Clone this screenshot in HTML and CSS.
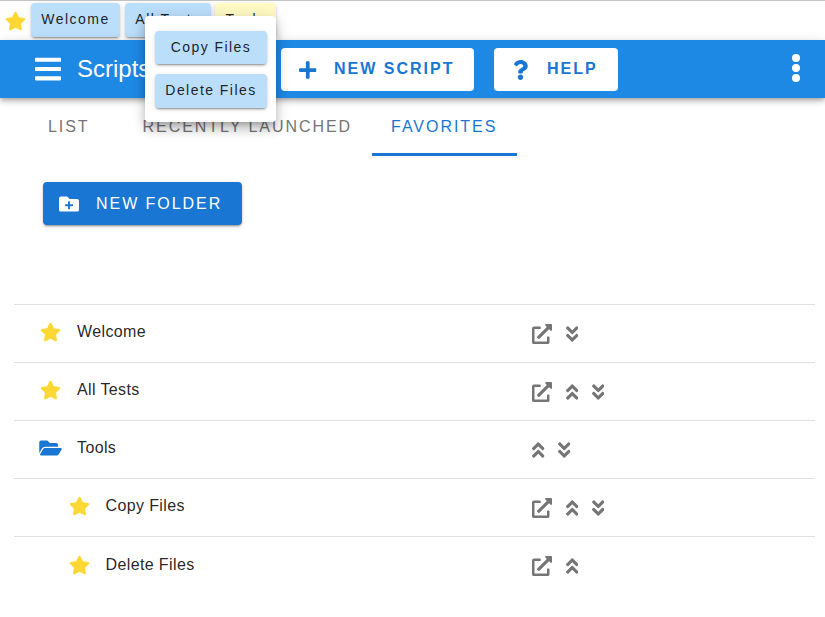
FILE: index.html
```html
<!DOCTYPE html>
<html lang="en">
<head>
<meta charset="utf-8">
<title>Scripts</title>
<link rel="stylesheet" href="styles.css">
</head>
<body>
<svg class="defs" aria-hidden="true">
  <symbol id="star" viewBox="0 0 576 512"><path d="M259.3 17.8L194 150.2 47.9 171.5c-26.2 3.8-36.7 36.1-17.7 54.6l105.7 103-25 145.5c-4.5 26.3 23.2 46 46.4 33.7L288 439.6l130.7 68.7c23.2 12.2 50.9-7.4 46.4-33.7l-25-145.5 105.7-103c19-18.5 8.5-50.8-17.7-54.6L382 150.2 316.7 17.8c-11.7-23.6-45.6-23.9-57.4 0z"/></symbol>
  <symbol id="bars" viewBox="0 0 448 512"><path d="M16 132h416c8.837 0 16-7.163 16-16V76c0-8.837-7.163-16-16-16H16C7.163 60 0 67.163 0 76v40c0 8.837 7.163 16 16 16zm0 160h416c8.837 0 16-7.163 16-16v-40c0-8.837-7.163-16-16-16H16c-8.837 0-16 7.163-16 16v40c0 8.837 7.163 16 16 16zm0 160h416c8.837 0 16-7.163 16-16v-40c0-8.837-7.163-16-16-16H16c-8.837 0-16 7.163-16 16v40c0 8.837 7.163 16 16 16z"/></symbol>
  <symbol id="plus" viewBox="0 0 448 512"><path d="M416 208H272V64c0-17.67-14.33-32-32-32h-32c-17.67 0-32 14.33-32 32v144H32c-17.67 0-32 14.33-32 32v32c0 17.67 14.33 32 32 32h144v144c0 17.67 14.33 32 32 32h32c17.67 0 32-14.33 32-32V304h144c17.67 0 32-14.33 32-32v-32c0-17.67-14.33-32-32-32z"/></symbol>
  <symbol id="question" viewBox="0 0 384 512"><path d="M202.021 0C122.202 0 70.503 32.703 29.914 91.026c-7.363 10.58-5.093 25.086 5.178 32.874l43.138 32.709c10.373 7.865 25.132 6.026 33.253-4.148 25.049-31.381 43.63-49.449 82.757-49.449 30.764 0 68.816 19.799 68.816 49.631 0 22.552-18.617 34.134-48.993 51.164-35.423 19.86-82.299 44.576-82.299 106.405V320c0 13.255 10.745 24 24 24h72.471c13.255 0 24-10.745 24-24v-5.773c0-42.86 125.268-44.645 125.268-160.627C377.504 66.256 286.902 0 202.021 0zM192 373.459c-38.196 0-69.271 31.075-69.271 69.271 0 38.195 31.075 69.27 69.271 69.27s69.271-31.075 69.271-69.271-31.075-69.27-69.271-69.27z"/></symbol>
  <symbol id="folder-plus" viewBox="0 0 512 512"><path d="M464,128H272L208,64H48A48,48,0,0,0,0,112V400a48,48,0,0,0,48,48H464a48,48,0,0,0,48-48V176A48,48,0,0,0,464,128ZM359.5,296a16,16,0,0,1-16,16h-64v64a16,16,0,0,1-16,16h-16a16,16,0,0,1-16-16V312h-64a16,16,0,0,1-16-16V280a16,16,0,0,1,16-16h64V200a16,16,0,0,1,16-16h16a16,16,0,0,1,16,16v64h64a16,16,0,0,1,16,16Z"/></symbol>
  <symbol id="folder-open" viewBox="0 0 576 512"><path d="M572.694 292.093L500.27 416.248A63.997 63.997 0 0 1 444.989 448H45.025c-18.523 0-30.064-20.093-20.731-36.093l72.424-124.155A64 64 0 0 1 152 256h399.964c18.523 0 30.064 20.093 20.73 36.093zM152 224h328v-48c0-26.51-21.49-48-48-48H272l-64-64H48C21.49 64 0 85.49 0 112v278.046l69.077-118.418C86.214 242.25 117.989 224 152 224z"/></symbol>
  <symbol id="open" viewBox="0 0 512 512"><path d="M432,320H400a16,16,0,0,0-16,16V448H64V128H208a16,16,0,0,0,16-16V80a16,16,0,0,0-16-16H48A48,48,0,0,0,0,112V464a48,48,0,0,0,48,48H400a48,48,0,0,0,48-48V336A16,16,0,0,0,432,320ZM488,0h-128c-21.37,0-32.05,25.91-17,41l35.73,35.73L135,320.37a24,24,0,0,0,0,34L157.67,377a24,24,0,0,0,34,0L435.28,133.32,471,169c15,15,41,4.5,41-17V24A24,24,0,0,0,488,0Z"/></symbol>
  <symbol id="down" viewBox="0 0 320 512"><path d="M143 256.3L7 120.3c-9.4-9.4-9.4-24.6 0-33.9l22.6-22.6c9.4-9.4 24.6-9.4 33.9 0l96.4 96.4 96.4-96.4c9.4-9.4 24.6-9.4 33.9 0L313 86.3c9.4 9.4 9.4 24.6 0 33.9l-136 136c-9.4 9.5-24.6 9.5-34 .1zm34 192l136-136c9.4-9.4 9.4-24.6 0-33.9l-22.6-22.6c-9.4-9.4-24.6-9.4-33.9 0L160 352.1l-96.4-96.4c-9.4-9.4-24.6-9.4-33.9 0L7 278.3c-9.4 9.4-9.4 24.6 0 33.9l136 136c9.4 9.5 24.6 9.5 34 .1z"/></symbol>
  <symbol id="up" viewBox="0 0 320 512"><path d="M177 255.7l136 136c9.4 9.4 9.4 24.6 0 33.9l-22.6 22.6c-9.4 9.4-24.6 9.4-33.9 0L160 351.9l-96.4 96.4c-9.4 9.4-24.6 9.4-33.9 0L7 425.7c-9.4-9.4-9.4-24.6 0-33.9l136-136c9.4-9.5 24.6-9.5 34-.1zm-34-192L7 199.7c-9.4 9.4-9.4 24.6 0 33.9l22.6 22.6c9.4 9.4 24.6 9.4 33.9 0l96.4-96.4 96.4 96.4c9.4 9.4 24.6 9.4 33.9 0l22.6-22.6c9.4-9.4 9.4-24.6 0-33.9l-136-136c-9.4-9.5-24.6-9.5-34-.1z"/></symbol>
</svg>

<nav class="favbar">
  <svg class="favbar-star"><use href="#star"/></svg>
  <button class="chip chip-welcome">Welcome</button>
  <button class="chip chip-tests">All Tests</button>
  <button class="chip chip-folder">Tools</button>
</nav>

<div class="popup">
  <button class="chip popup-chip">Copy Files</button>
  <button class="chip popup-chip">Delete Files</button>
</div>

<header class="appbar">
  <svg class="appbar-menu"><use href="#bars"/></svg>
  <div class="appbar-title">Scripts</div>
  <button class="appbar-btn btn-new"><svg class="icon-plus"><use href="#plus"/></svg><span>NEW SCRIPT</span></button>
  <button class="appbar-btn btn-help"><svg class="icon-question"><use href="#question"/></svg><span>HELP</span></button>
  <div class="appbar-more"><i class="dot"></i><i class="dot"></i><i class="dot"></i></div>
</header>

<div class="tabs">
  <div class="tab tab-list">LIST</div>
  <div class="tab tab-recent">RECENTLY LAUNCHED</div>
  <div class="tab tab-active">FAVORITES</div>
</div>

<main class="content">
  <button class="folder-btn"><svg class="icon-folder-plus"><use href="#folder-plus"/></svg><span>NEW FOLDER</span></button>

  <ul class="list">
    <li class="row">
      <div class="name"><svg class="star"><use href="#star"/></svg><span>Welcome</span></div>
      <div class="actions"><svg class="act-open"><use href="#open"/></svg><svg class="act"><use href="#down"/></svg></div>
    </li>
    <li class="row">
      <div class="name"><svg class="star"><use href="#star"/></svg><span>All Tests</span></div>
      <div class="actions"><svg class="act-open"><use href="#open"/></svg><svg class="act"><use href="#up"/></svg><svg class="act"><use href="#down"/></svg></div>
    </li>
    <li class="row">
      <div class="name"><svg class="folder"><use href="#folder-open"/></svg><span>Tools</span></div>
      <div class="actions"><svg class="act"><use href="#up"/></svg><svg class="act"><use href="#down"/></svg></div>
    </li>
    <li class="row row-nested">
      <div class="name"><svg class="star"><use href="#star"/></svg><span>Copy Files</span></div>
      <div class="actions"><svg class="act-open"><use href="#open"/></svg><svg class="act"><use href="#up"/></svg><svg class="act"><use href="#down"/></svg></div>
    </li>
    <li class="row row-nested">
      <div class="name"><svg class="star"><use href="#star"/></svg><span>Delete Files</span></div>
      <div class="actions"><svg class="act-open"><use href="#open"/></svg><svg class="act"><use href="#up"/></svg></div>
    </li>
  </ul>
</main>
</body>
</html>
```

FILE: styles.css
```css
* { box-sizing: border-box; }
html, body { margin: 0; padding: 0; background: #fff; }
body { width: 825px; height: 617px; overflow: hidden; position: relative; font-family: "Liberation Sans", Arial, sans-serif; color: rgba(0,0,0,.87); }
button { font: inherit; border: 0; padding: 0; cursor: pointer; }
.defs { width: 0; height: 0; position: absolute; }

.favbar { height: 40px; border-top: 1px solid #c4c4c4; display: flex; align-items: flex-start; padding: 0 0 0 5px; }
.favbar-star { width: 21px; height: 20px; fill: #fdd835; margin: 10px 5px 0 0; flex: none; }
.chip { height: 34px; padding: 0 0 2px; border-radius: 4px; background: #bbdefb; color: rgba(0,0,0,.87); font-family: "Liberation Sans", Arial, sans-serif; font-size: 14px; letter-spacing: 1.5px; box-shadow: 0 3px 1px -2px rgba(0,0,0,.2), 0 2px 2px 0 rgba(0,0,0,.14), 0 1px 5px 0 rgba(0,0,0,.12); white-space: nowrap; text-align: center; flex: none; }
.chip-welcome { width: 89px; margin: 2px 5px 0 0; }
.chip-tests { width: 86px; margin: 2px 4px 0 0; }
.chip-folder { width: 61px; margin: 2px 0 0; background: #fff9c4; }

.popup { position: absolute; left: 145px; top: 16px; width: 131px; height: 106px; z-index: 5; background: #fff; border-radius: 4px; padding: 15px 10px 0; display: flex; flex-direction: column; gap: 10px; box-shadow: 0 5px 5px -3px rgba(0,0,0,.2), 0 8px 10px 1px rgba(0,0,0,.14), 0 3px 14px 2px rgba(0,0,0,.12); }
.popup-chip { width: 112px; height: 33px; letter-spacing: 1.45px; }
.popup-chip + .popup-chip { height: 34px; }

.appbar { height: 58px; background: #1e88e5; display: flex; align-items: center; position: relative; z-index: 2; box-shadow: 0 2px 4px -1px rgba(0,0,0,.2), 0 4px 5px 0 rgba(0,0,0,.14), 0 1px 10px 0 rgba(0,0,0,.12); }
.appbar-menu { width: 26px; height: 30px; fill: #fff; margin-left: 35px; }
.appbar-title { width: 204px; margin-left: 16px; color: #fff; font-size: 24px; line-height: 32px; }
.appbar-btn { height: 43px; margin-top: 1px; padding-bottom: 2px; background: #fff; border-radius: 4px; color: #1976d2; font-family: "Liberation Sans", Arial, sans-serif; font-weight: 700; font-size: 16px; letter-spacing: 2px; display: flex; align-items: center; }
.appbar-btn svg { position: relative; top: 1px; }
.btn-new { width: 193px; padding-left: 18px; margin-right: 20px; }
.btn-help { width: 124px; padding-left: 19px; }
.icon-plus { width: 17.5px; height: 20px; fill: #1976d2; margin-right: 17.5px; }
.icon-question { width: 15px; height: 20px; fill: #1976d2; margin-right: 19px; }
.appbar-more { margin: 0 25px 2px auto; display: flex; flex-direction: column; gap: 2px; }
.dot { display: block; width: 8px; height: 8px; border-radius: 50%; background: #fff; }

.tabs { height: 58px; display: flex; padding-left: 29px; position: relative; }
.tab { height: 58px; padding: 0 19px; display: flex; align-items: center; font-size: 16px; letter-spacing: 1.95px; color: #757575; white-space: nowrap; }
.tab-recent { margin-left: 15px; }
.tab-active { color: #1976d2; border-bottom: 3px solid #1976d2; padding-top: 3px; width: 145px; margin-left: 1px; }

.content { padding: 26px 10px 0 14px; }
.folder-btn { margin-left: 29px; width: 199px; height: 43px; background: #1976d2; color: #fff; border-radius: 4px; display: flex; align-items: center; padding-left: 16px; font-family: "Liberation Sans", Arial, sans-serif; font-size: 16px; letter-spacing: 1.95px; box-shadow: 0 3px 1px -2px rgba(0,0,0,.2), 0 2px 2px 0 rgba(0,0,0,.14), 0 1px 5px 0 rgba(0,0,0,.12); }
.icon-folder-plus { width: 20px; height: 20px; fill: #fff; margin-right: 17px; }

.list { list-style: none; margin: 79px 0 0; padding: 0; }
.row { height: 58px; border-top: 1px solid #e0e0e0; display: grid; grid-template-columns: 518px 1fr; align-items: center; }
.name { display: flex; align-items: center; padding-left: 26px; font-size: 16px; letter-spacing: .38px; padding-bottom: 4px; }
.row:last-child .name { padding-bottom: 2px; }
.row-nested .name { padding-left: 55px; }
.row-nested .star { margin-right: 15.5px; }
.star { width: 21px; height: 20px; fill: #fdd835; margin-right: 16px; flex: none; }
.folder { width: 23px; height: 20px; fill: #1976d2; margin-right: 15px; margin-left: -1px; flex: none; }
.actions { display: flex; align-items: center; gap: 13.5px; padding-top: 1px; }
.act-open { width: 20px; height: 20px; fill: #757575; }
.act { width: 12.5px; height: 20px; fill: #757575; }
```
